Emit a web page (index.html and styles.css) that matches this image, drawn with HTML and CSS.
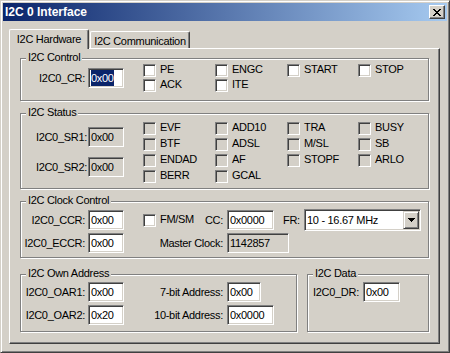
FILE: index.html
```html
<!DOCTYPE html>
<html lang="en">
  <head>
    <meta charset="UTF-8" />
    <meta name="viewport" content="width=device-width, initial-scale=1.0" />
    <title>I2C 0 Interface</title>
    <link rel="stylesheet" href="styles.css">
  </head>
  <body>
    <div class="window">
      <div class="caption">
        <span class="caption-text">I2C 0 Interface</span>
        <span class="close-btn">
          <svg width="8" height="7" viewBox="0 0 8 7" shape-rendering="crispEdges">
            <path d="M0 0h2v1H0zM6 0h2v1H6zM1 1h2v1H1zM5 1h2v1H5zM2 2h4v1H2zM3 3h2v1H3zM2 4h4v1H2zM1 5h2v1H1zM5 5h2v1H5zM0 6h2v1H0zM6 6h2v1H6z" fill="#000"/>
          </svg>
        </span>
      </div>

      <div class="client">
        <div class="tabs">
          <div class="tab active">I2C Hardware</div>
          <div class="tab second">I2C Communication</div>
        </div>

        <div class="panel">
          <!-- control -->
          <div class="group g-control">
            <span class="group-title">I2C Control</span>
            <div class="field">
              <label class="lbl">I2C0_CR:</label>
              <span class="edit"><span class="sel">0x00</span></span>
            </div>
            <div class="checks">
              <span class="check"><i class="box"></i>PE</span>
              <span class="check"><i class="box"></i>ENGC</span>
              <span class="check"><i class="box"></i>START</span>
              <span class="check"><i class="box"></i>STOP</span>
              <span class="check"><i class="box"></i>ACK</span>
              <span class="check"><i class="box"></i>ITE</span>
            </div>
          </div>

          <!-- status -->
          <div class="group g-status">
            <span class="group-title">I2C Status</span>
            <div class="fields">
              <div class="field">
                <label class="lbl lbl-tight">I2C0_SR1:</label>
                <span class="edit ro">0x00</span>
              </div>
              <div class="field">
                <label class="lbl lbl-tight">I2C0_SR2:</label>
                <span class="edit ro">0x00</span>
              </div>
            </div>
            <div class="checks checks-status">
              <span class="check"><i class="box off"></i>EVF</span>
              <span class="check"><i class="box off"></i>ADD10</span>
              <span class="check"><i class="box off"></i>TRA</span>
              <span class="check"><i class="box off"></i>BUSY</span>
              <span class="check"><i class="box off"></i>BTF</span>
              <span class="check"><i class="box off"></i>ADSL</span>
              <span class="check"><i class="box off"></i>M/SL</span>
              <span class="check"><i class="box off"></i>SB</span>
              <span class="check"><i class="box off"></i>ENDAD</span>
              <span class="check"><i class="box off"></i>AF</span>
              <span class="check"><i class="box off"></i>STOPF</span>
              <span class="check"><i class="box off"></i>ARLO</span>
              <span class="check"><i class="box off"></i>BERR</span>
              <span class="check"><i class="box off"></i>GCAL</span>
            </div>
          </div>

          <!-- clock -->
          <div class="group g-clock">
            <span class="group-title">I2C Clock Control</span>
            <div class="row">
              <label class="lbl">I2C0_CCR:</label>
              <span class="edit">0x00</span>
              <div class="cell">
                <span class="check"><i class="box"></i>FM/SM</span>
                <span>CC:</span>
              </div>
              <span class="edit w47">0x0000</span>
              <span class="fr-lbl">FR:</span>
              <div class="combo">
                <span class="combo-text">10 - 16.67 MHz</span>
                <span class="combo-btn">
                  <svg width="7" height="4" viewBox="0 0 7 4" shape-rendering="crispEdges">
                    <path d="M0 0h7v1H0zM1 1h5v1H1zM2 2h3v1H2zM3 3h1v1H3z" fill="#000"/>
                  </svg>
                </span>
              </div>
            </div>
            <div class="row">
              <label class="lbl">I2C0_ECCR:</label>
              <span class="edit">0x00</span>
              <div class="cell cell-right"><span>Master Clock:</span></div>
              <span class="edit ro w62">1142857</span>
            </div>
          </div>

          <div class="bottom">
            <!-- own address -->
            <div class="group g-own">
              <span class="group-title">I2C Own Address</span>
              <div class="row">
                <label class="lbl">I2C0_OAR1:</label>
                <span class="edit">0x00</span>
                <span class="addr-lbl">7-bit Address:</span>
                <span class="edit w34">0x00</span>
              </div>
              <div class="row">
                <label class="lbl">I2C0_OAR2:</label>
                <span class="edit">0x20</span>
                <span class="addr-lbl">10-bit Address:</span>
                <span class="edit w47">0x0000</span>
              </div>
            </div>

            <!-- data -->
            <div class="group g-data">
              <span class="group-title">I2C Data</span>
              <div class="row">
                <label class="dr-lbl">I2C0_DR:</label>
                <span class="edit w37">0x00</span>
              </div>
            </div>
          </div>
        </div>
      </div>
    </div>
  </body>
</html>
```

FILE: styles.css
```css
* {
  margin: 0;
  padding: 0;
  box-sizing: border-box;
}

body {
  width: 450px;
  height: 353px;
  overflow: hidden;
  background: #d4d0c8;
  color: #000;
  font-family: "Liberation Sans", Arial, sans-serif;
  font-size: 11px;
  line-height: 13px;
  letter-spacing: -0.3px;
}

/* window frame */
.window {
  display: flex;
  flex-direction: column;
  width: 450px;
  height: 353px;
  padding: 2px;
  background: #d4d0c8;
  border: 1px solid;
  border-color: #d4d0c8 #404040 #404040 #d4d0c8;
  box-shadow: inset 1px 1px #fff, inset -1px -1px #808080;
}

.caption {
  display: flex;
  align-items: center;
  justify-content: space-between;
  height: 18px;
  padding: 0 2px;
  background: linear-gradient(to right, #0a246a, #a6caf0);
}

.caption-text {
  color: #fff;
  font-weight: bold;
  font-size: 12px;
  letter-spacing: 0;
}

.close-btn {
  display: flex;
  align-items: center;
  justify-content: center;
  width: 16px;
  height: 14px;
  background: #d4d0c8;
  border: 1px solid;
  border-color: #fff #404040 #404040 #fff;
  box-shadow: inset -1px -1px #808080;
}

/* tabs */
.tabs {
  display: flex;
  align-items: flex-end;
  height: 19px;
  margin: 8px 0 0 6px;
}

.tab {
  height: 17px;
  padding-top: 3px;
  text-align: center;
  white-space: nowrap;
  background: #d4d0c8;
  border: 1px solid;
  border-bottom: none;
  border-color: #fff #404040 #404040 #fff;
  border-radius: 2px 2px 0 0;
  box-shadow: inset -1px 0 #808080;
}

.tab.active {
  position: relative;
  z-index: 1;
  width: 80px;
  height: 20px;
  margin-bottom: -1px;
}

.tab.second {
  width: 100px;
  margin-left: 1px;
}

.panel {
  display: flex;
  flex-direction: column;
  width: 431px;
  height: 296px;
  margin-left: 6px;
  padding: 9px 10px;
  border: 1px solid;
  border-color: #fff #404040 #404040 #fff;
  box-shadow: inset -1px -1px #808080;
}

/* group boxes */
.group {
  position: relative;
  border: 1px solid #808080;
  box-shadow: 1px 1px #fff, inset 1px 1px #fff;
}

.group-title {
  position: absolute;
  top: -8px;
  left: 5px;
  padding: 0 2px;
  background: #d4d0c8;
  white-space: nowrap;
}

.g-control {
  display: flex;
  align-items: center;
  height: 43px;
  padding-bottom: 3px;
}

.g-status {
  display: flex;
  align-items: flex-start;
  height: 76px;
  margin-top: 12px;
  padding-top: 8px;
}

.g-clock {
  display: flex;
  flex-direction: column;
  gap: 3px;
  height: 57px;
  margin-top: 12px;
  padding-top: 8px;
}

.bottom {
  display: flex;
  gap: 10px;
  margin-top: 16px;
}

.g-own {
  display: flex;
  flex-direction: column;
  gap: 3px;
  width: 277px;
  height: 58px;
  padding-top: 7px;
}

.g-data {
  width: 122px;
  height: 58px;
  padding: 7px 0 0 2px;
}

/* fields */
.field,
.row {
  display: flex;
  align-items: center;
}

.fields {
  display: flex;
  flex-direction: column;
  gap: 10px;
  margin-top: 5px;
}

.lbl {
  width: 64px;
  margin-right: 3px;
  text-align: right;
  white-space: nowrap;
}

.lbl-tight {
  width: 66px;
  margin-right: 1px;
}

.edit {
  flex: none;
  width: 36px;
  height: 20px;
  padding-left: 2px;
  line-height: 18px;
  white-space: nowrap;
  overflow: hidden;
  background: #fff;
  border: 1px solid;
  border-color: #808080 #fff #fff #808080;
  box-shadow: inset 1px 1px #404040, inset -1px -1px #d4d0c8;
}

.edit.ro {
  background: #d4d0c8;
}

.w34 { width: 34px; }
.w37 { width: 37px; }
.w47 { width: 47px; }
.w62 { width: 62px; }

.sel {
  display: inline-block;
  vertical-align: top;
  margin-top: 1px;
  line-height: 16px;
  background: #0a246a;
  color: #fff;
}

/* checkboxes */
.checks {
  display: grid;
  grid-template-columns: 72px 72px 71px auto;
  row-gap: 2px;
  margin-left: 19px;
}

.checks-status {
  row-gap: 3px;
}

.check {
  display: flex;
  align-items: flex-start;
  height: 13px;
  line-height: 11px;
  white-space: nowrap;
}

.box {
  flex: none;
  width: 13px;
  height: 13px;
  margin-right: 4px;
  background: #fff;
  border: 1px solid;
  border-color: #808080 #fff #fff #808080;
  box-shadow: inset 1px 1px #404040, inset -1px -1px #d4d0c8;
}

.box.off {
  background: #d4d0c8;
}

/* clock row pieces */
.cell {
  display: flex;
  align-items: center;
  justify-content: space-between;
  width: 80px;
  margin: 0 4px 0 19px;
}

.cell-right {
  justify-content: flex-end;
}

.fr-lbl {
  width: 17px;
  margin: 0 4px 0 9px;
  white-space: nowrap;
}

.combo {
  display: flex;
  width: 117px;
  height: 22px;
  margin: -1px 0;
  padding: 1px;
  background: #fff;
  border: 1px solid;
  border-color: #808080 #fff #fff #808080;
  box-shadow: inset 1px 1px #404040, inset -1px -1px #d4d0c8;
}

.combo-text {
  flex: 1;
  padding-left: 1px;
  line-height: 18px;
  white-space: nowrap;
}

.combo-btn {
  display: flex;
  align-items: center;
  justify-content: center;
  width: 16px;
  height: 18px;
  background: #d4d0c8;
  border: 1px solid;
  border-color: #d4d0c8 #404040 #404040 #d4d0c8;
  box-shadow: inset 1px 1px #fff, inset -1px -1px #808080;
}

/* address rows */
.addr-lbl {
  width: 99px;
  margin-right: 4px;
  text-align: right;
  white-space: nowrap;
}

.dr-lbl {
  width: 52px;
  margin-right: 1px;
  padding-left: 3px;
  white-space: nowrap;
}
```
